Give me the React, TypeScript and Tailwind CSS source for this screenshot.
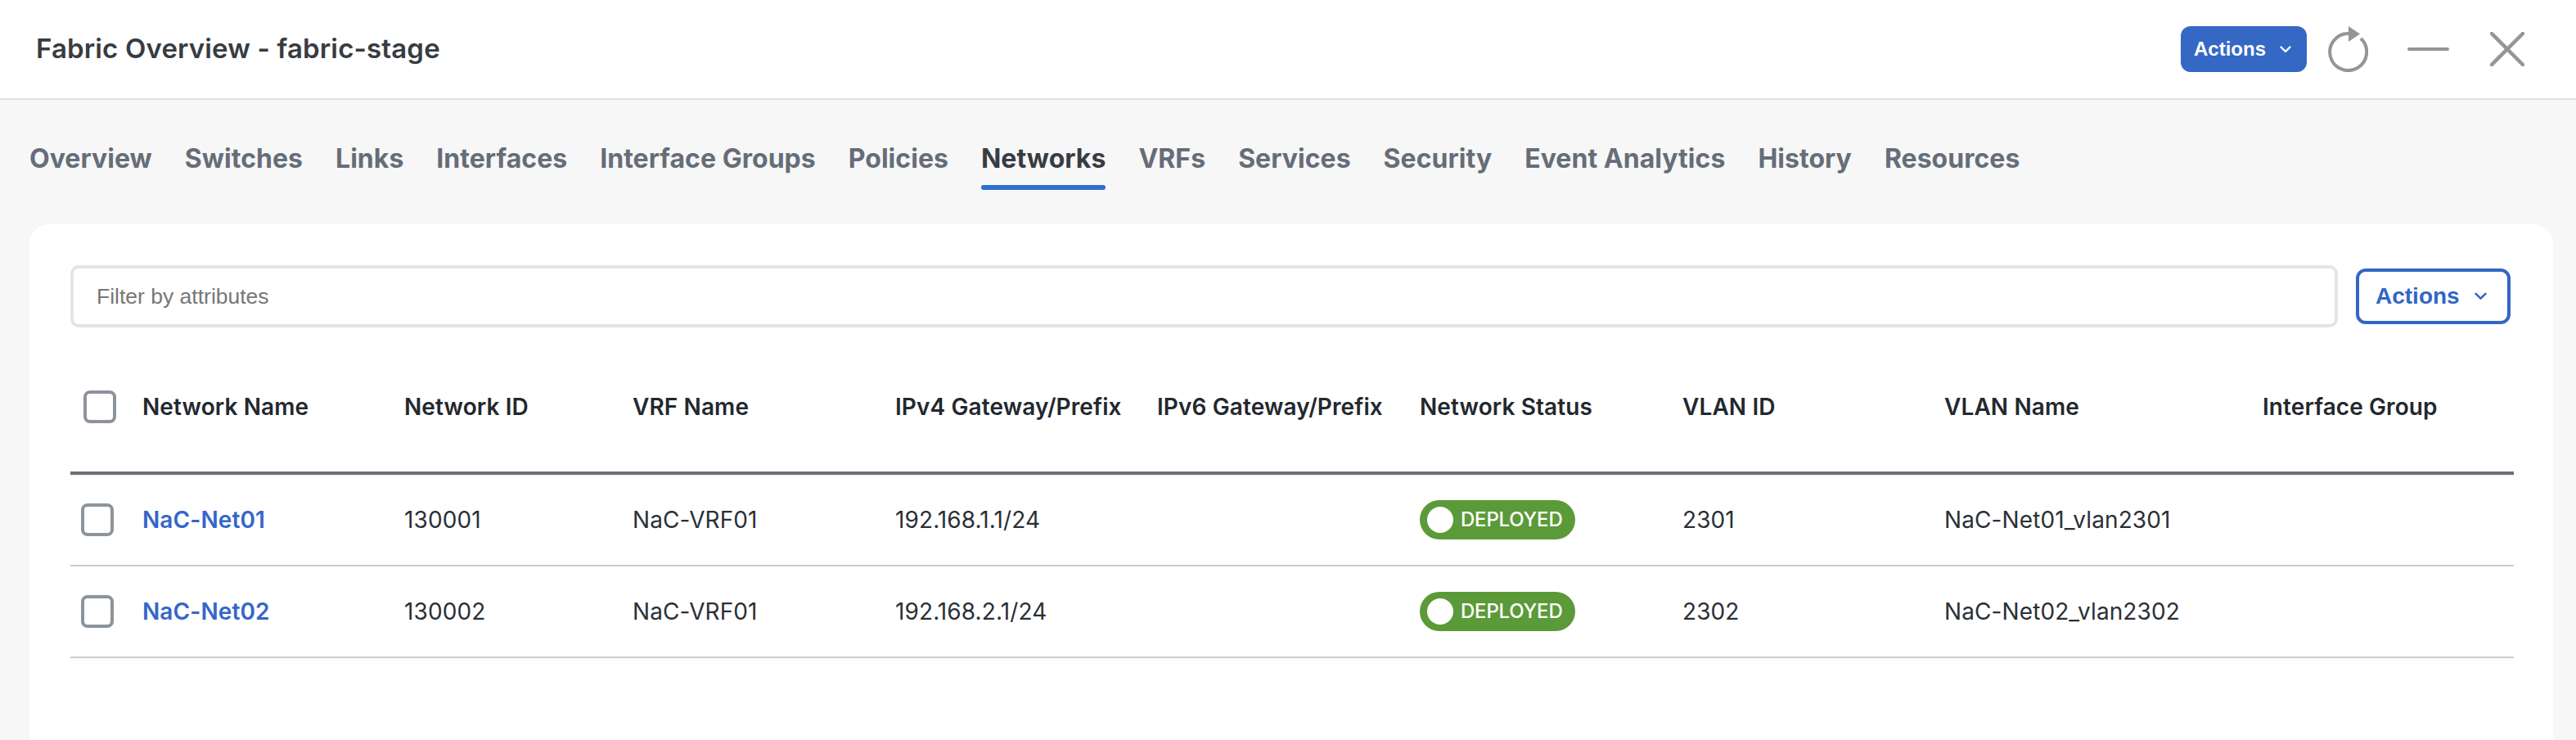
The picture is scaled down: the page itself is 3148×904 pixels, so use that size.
import React from 'react';

const tabs = ['Overview', 'Switches', 'Links', 'Interfaces', 'Interface Groups', 'Policies', 'Networks', 'VRFs', 'Services', 'Security', 'Event Analytics', 'History', 'Resources'];
const gridCols = 'grid grid-cols-[88px_320px_279px_321px_320px_321px_321px_320px_389px_1fr] items-center';

const columns = ['Network Name', 'Network ID', 'VRF Name', 'IPv4 Gateway/Prefix', 'IPv6 Gateway/Prefix', 'Network Status', 'VLAN ID', 'VLAN Name', 'Interface Group'];

const rows = [
  { name: 'NaC-Net01', id: '130001', vrf: 'NaC-VRF01', ipv4: '192.168.1.1/24', vlan: '2301', vlanName: 'NaC-Net01_vlan2301' },
  { name: 'NaC-Net02', id: '130002', vrf: 'NaC-VRF01', ipv4: '192.168.2.1/24', vlan: '2302', vlanName: 'NaC-Net02_vlan2302' },
];

const Chevron: React.FC<{ className: string }> = ({ className }) => (
  <svg className={className} viewBox="0 0 14 9" fill="none" stroke="currentColor" strokeWidth="2.4" strokeLinecap="round" strokeLinejoin="round">
    <path d="M1.5 1.5 7 7l5.5-5.5" />
  </svg>
);

const Checkbox: React.FC<{ className?: string }> = ({ className = '' }) => (
  <div className={`w-10 h-10 rounded-lg border-4 border-[#8c939c] bg-white ${className}`} />
);

const StatusBadge = () => (
  <div className="w-[190px] h-12 rounded-full bg-[#5b9a38] flex items-center pl-[9px] gap-[9px]">
    <span className="w-8 h-8 rounded-full bg-white" />
    <span className="text-[24px] leading-none font-medium text-white tracking-[-0.2px]">DEPLOYED</span>
  </div>
);

export default function App() {
  return (
    <div className="w-[3148px] h-[904px] overflow-hidden bg-[#f7f7f8] font-['Inter',sans-serif]">
      <div className="h-[122px] bg-white border-b-2 border-[#e0e0e0] flex items-center pl-[44px] pr-[63px]">
        <h1 className="text-[33px] font-semibold text-[#373c42] tracking-[0.15px]">Fabric Overview - fabric-stage</h1>
        <div className="ml-auto flex items-center">
          <button className="w-[154px] h-14 rounded-xl bg-[#3567c5] text-white flex items-center pl-4 gap-[17px] font-['Liberation_Sans',sans-serif] font-bold text-[24px]">
            Actions
            <Chevron className="w-[14px] h-[9px]" />
          </button>
          <svg className="ml-[26px] w-[49px] h-14" viewBox="0 0 49 56" fill="none" stroke="#959595" strokeWidth="4">
            <path d="M25 9A22.5 22.5 0 1 0 40 15" />
            <polygon points="25,0 39,9.5 25,19" fill="#959595" stroke="none" />
          </svg>
          <div className="ml-12 w-[51px] h-1 rounded-full bg-[#959595]" />
          <svg className="ml-[50px] w-[42px] h-[42px]" viewBox="0 0 42 42" fill="none" stroke="#959595" strokeWidth="4.5" strokeLinecap="round">
            <path d="M2 2l38 38M40 2 2 40" />
          </svg>
        </div>
      </div>

      <div className="h-[152px] pl-9 pt-[48px] flex gap-10 items-start tracking-[0.03px]">
        {tabs.map((tab) =>
          tab === 'Networks' ? (
            <div key={tab} className="flex flex-col items-stretch">
              <span className="text-[32px] leading-[48px] font-bold text-[#373c42]">{tab}</span>
              <span className="mt-2 h-[6px] rounded-full bg-[#2f6fd0]" />
            </div>
          ) : (
            <span key={tab} className="text-[32px] leading-[48px] font-bold text-[#666d77]">{tab}</span>
          ),
        )}
      </div>

      <div className="mx-9 w-[3084px] h-[630px] rounded-t-3xl bg-white pl-[50px] pr-[48px] pt-[50px]">
        <div className="flex items-center">
          <div className="w-[2771px] h-[76px] rounded-[10px] border-4 border-[#e4e5e8] flex items-center pl-7 pt-0.5 text-[26.5px] text-[#777777] font-['Liberation_Sans',sans-serif]">
            Filter by attributes
          </div>
          <button className="ml-[22px] w-[189px] h-[68px] rounded-xl border-4 border-[#3366c4] text-[#3366c4] flex items-center pl-5 gap-[18px] font-['Liberation_Sans',sans-serif] font-bold text-[28px]">
            Actions
            <Chevron className="w-[15px] h-[10px]" />
          </button>
        </div>

        <div className="w-[2986px]">
          <div className={`${gridCols} h-[180px] pt-[18px] border-b-4 border-[#6b7078] shadow-[0_2px_0_#f1f2f3] text-[28px] font-semibold tracking-[0.1px] text-[#23282e]`}>
            <Checkbox className="ml-4" />
            {columns.map((col) => (
              <div key={col} className="whitespace-nowrap">{col}</div>
            ))}
          </div>
          {rows.map((row) => (
            <div key={row.name} className={`${gridCols} h-[112px] border-b-2 border-[#cccccc] text-[28px] tracking-[0.1px] text-[#2b3036]`}>
              <Checkbox className="ml-[13px]" />
              <a className="font-semibold text-[#3566c8]">{row.name}</a>
              <div>{row.id}</div>
              <div>{row.vrf}</div>
              <div>{row.ipv4}</div>
              <div />
              <StatusBadge />
              <div>{row.vlan}</div>
              <div>{row.vlanName}</div>
              <div />
            </div>
          ))}
        </div>
      </div>
    </div>
  );
}
